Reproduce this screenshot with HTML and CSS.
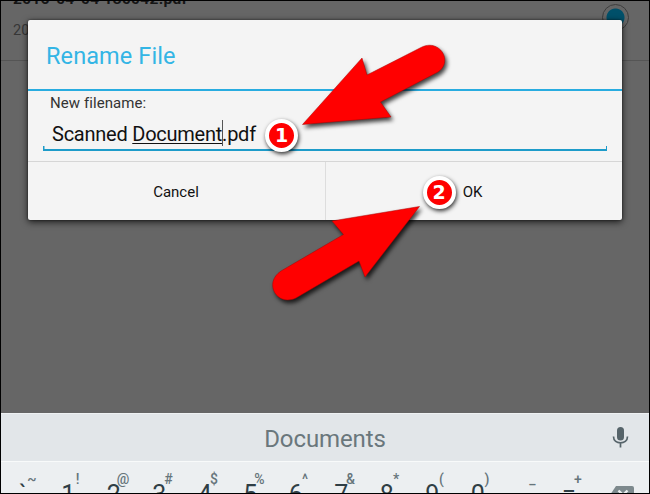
FILE: index.html
```html
<!DOCTYPE html>
<html lang="en">
<head>
<meta charset="utf-8">
<title>Rename File</title>
<link rel="stylesheet" href="styles.css">
</head>
<body>
<div class="screen">
  <main class="backdrop">
    <div class="file-row">
      <div class="file-name"><span>2016-04-04 130042.pdf</span></div>
      <div class="file-date">20</div>
      <div class="radio"></div>
    </div>
  </main>

  <section class="dialog">
    <h1 class="title"><span>Rename File</span></h1>
    <div class="body">
      <label class="label"><span>New filename:</span></label>
      <div class="field"><span class="value">Scanned <span class="composing">Document</span><i class="caret"></i>.pdf</span></div>
    </div>
    <div class="buttons">
      <div class="button"><span>Cancel</span></div>
      <div class="button"><span>OK</span></div>
    </div>
  </section>

  <section class="keyboard">
    <div class="suggestions">
      <span>Documents</span>
      <svg class="mic" width="18" height="24" viewBox="0 0 18 24"><rect x="6" y="2" width="7" height="13.5" rx="3.5" fill="#56646a"/><path d="M2.500 11.500c0 8.400 14 8.400 14 0M9.500 17.500V22.500" fill="none" stroke="#56646a" stroke-width="1.7"/></svg>
    </div>
    <div class="keys">
      <div class="key">`<sup>~</sup></div>
      <div class="key">1<sup>!</sup></div>
      <div class="key">2<sup>@</sup></div>
      <div class="key">3<sup>#</sup></div>
      <div class="key">4<sup>$</sup></div>
      <div class="key">5<sup>%</sup></div>
      <div class="key">6<sup>^</sup></div>
      <div class="key">7<sup>&amp;</sup></div>
      <div class="key">8<sup>*</sup></div>
      <div class="key">9<sup>(</sup></div>
      <div class="key">0<sup>)</sup></div>
      <div class="key">-<sup>_</sup></div>
      <div class="key equals"><span>=</span><sup>+</sup></div>
      <div class="key erase"><svg width="25" height="18" viewBox="0 0 25 18"><path d="M7 0H23Q25 0 25 2V16Q25 18 23 18H7L1 9Z" fill="#7d898d"/><path d="M9.500 4.500l9 9M18.500 4.500l-9 9" stroke="#eceff1" stroke-width="2.4"/></svg></div>
    </div>
  </section>

  <svg class="arrows" width="650" height="494" viewBox="0 0 650 494">
    <g fill="#f00" stroke="#a00" stroke-width=".5">
      <path d="M302.500 124.500L362 58L367 75L421 47.500C439 38 454 61 438 72L380.500 102L391 117Z"/>
      <path d="M419.500 206.500L332 221L343.500 234.500L281 271C263 283 277 307 296 298L359 261L365 277Z"/>
    </g>
  </svg>
  <div class="badge first">1</div>
  <div class="badge second">2</div>
  <div class="frame"></div>
</div>
</body>
</html>
```
FILE: styles.css
```css
* { box-sizing: border-box; }
body { margin: 0; font-family: Roboto, "Liberation Sans", sans-serif; }
.screen { position: relative; width: 650px; height: 494px; overflow: hidden; background: #666; }
.backdrop { height: 413px; }
.file-row { position: relative; height: 61px; border-bottom: 1px solid #555; padding-left: 13px; }
.file-name { height: 20px; font-size: 15.500px; font-weight: 700; line-height: 20px; color: #151515; transform: translateY(-11px); letter-spacing: .3px; }
.file-date { font-size: 14.500px; line-height: 20px; color: #363636; padding-top: 1px; }
.radio { position: absolute; left: 602px; top: 4px; width: 27px; height: 27px; border: 1.500px solid #3d3d3d; border-radius: 50%; background: radial-gradient(circle, #00506a 8.500px, transparent 9.500px); }
.dialog { position: absolute; left: 28px; top: 20px; width: 594px; height: 200px; display: flex; flex-direction: column; background: #f4f4f4; border-radius: 2px; box-shadow: 0 2px 7px rgba(0,0,0,.75), 0 0 2px rgba(0,0,0,.6); }
.title { height: 71px; margin: 0; padding-left: 18px; border-bottom: 2px solid #28ace0; font-size: 23.500px; line-height: 73px; font-weight: 400; color: #33b5e5; letter-spacing: .1px; }
.body { height: 70px; padding: 0 15px; }
.label { display: block; padding-left: 7px; font-size: 15px; line-height: 24px; color: #333; letter-spacing: .07px; }
.field { height: 36px; padding-left: 9px; font-size: 20px; line-height: 39px; color: #111; letter-spacing: -.24px; border-bottom: 2px solid #1d9bc9; background: linear-gradient(#1d9bc9,#1d9bc9) left bottom / 1.500px 3px no-repeat, linear-gradient(#1d9bc9,#1d9bc9) right bottom / 1.500px 3px no-repeat; }
.value { white-space: pre; }
.composing { text-decoration: underline 1px; text-underline-offset: 2px; }
.caret { display: inline-block; width: 1px; height: 26px; margin-right: -1px; vertical-align: -5px; background: #555; }
.buttons { flex: 1; display: grid; grid-template-columns: 297px 297px; border-top: 1px solid #d6d6d6; }
.button { display: flex; align-items: center; justify-content: center; font-size: 15px; color: #111; padding: 2px 1px 0 0; }
.button + .button { border-left: 1px solid #ddd; padding-right: 3px; }
.keyboard { height: 81px; background: #eceff1; }
.suggestions { position: relative; height: 49px; display: flex; align-items: center; justify-content: center; background: #e2e6e9; border-top: 1px solid #eef1f3; border-bottom: 1px solid #f8fafa; font-size: 24px; letter-spacing: -.1px; color: #6a777c; padding-top: 3px; }
.mic { position: absolute; left: 611px; top: 11px; }
.keys { display: grid; grid-template-columns: repeat(14, 45.500px); height: 32px; overflow: hidden; }
.key { position: relative; text-align: center; font-size: 25px; line-height: 30px; padding-top: 18px; height: 60px; color: #2f3e45; }
.key sup { position: absolute; left: 20px; top: 7px; width: 24px; text-align: center; font-size: 14px; font-weight: 500; line-height: 20px; color: #66757b; }
.equals { padding-top: 17px; }
.erase { padding-top: 24px; padding-left: 14px; line-height: 0; }
.arrows { position: absolute; left: 0; top: 0; filter: drop-shadow(2px 3px 2px rgba(0,0,0,.75)); }
.badge { position: absolute; width: 33px; height: 33px; border: 4px solid #fff; border-radius: 50%; background: #f00; color: #fff; font: 700 19px/25px "DejaVu Sans", sans-serif; text-align: center; box-shadow: 1px 2px 4px rgba(0,0,0,.8); }
.first { left: 265px; top: 118.500px; }
.second { left: 422.500px; top: 175.500px; }
.frame { position: absolute; inset: 0; border: 1px solid #000; }
```
